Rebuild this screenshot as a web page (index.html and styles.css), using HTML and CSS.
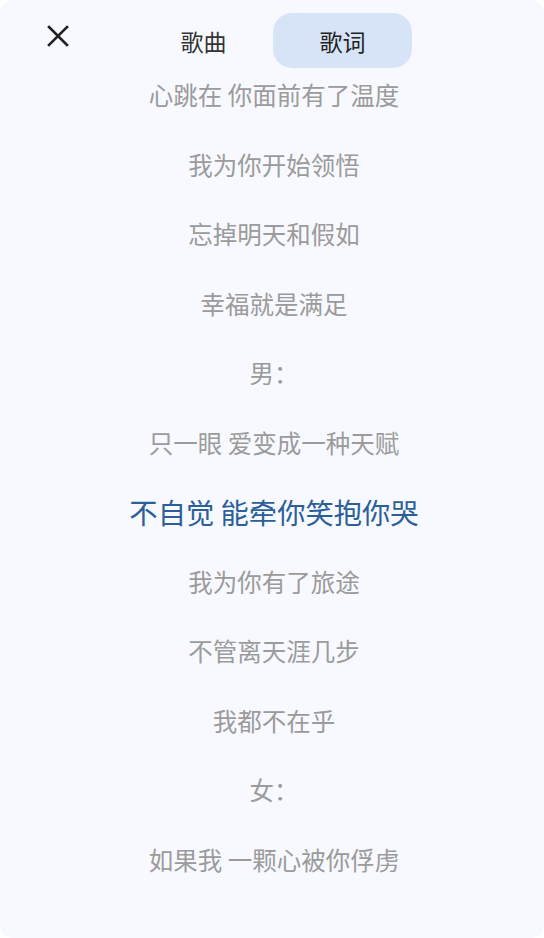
FILE: index.html
```html
<!DOCTYPE html>
<html lang="zh-CN">
<head>
<meta charset="utf-8">
<link rel="stylesheet" href="styles.css">
</head>
<body>
<div class="card">
  <header class="header">
    <button class="close" aria-label="关闭">
      <svg width="22" height="22" viewBox="0 0 22 22"><path d="M2 2 L20 20 M20 2 L2 20" stroke="#222" stroke-width="2.6" stroke-linecap="square" fill="none"/></svg>
    </button>
    <nav class="tabs">
      <div class="tab">歌曲</div>
      <div class="tab active">歌词</div>
    </nav>
  </header>
  <main class="lyrics">
    <p class="line">心跳在 你面前有了温度</p>
    <p class="line">我为你开始领悟</p>
    <p class="line">忘掉明天和假如</p>
    <p class="line">幸福就是满足</p>
    <p class="line">男：</p>
    <p class="line">只一眼 爱变成一种天赋</p>
    <p class="line current">不自觉 能牵你笑抱你哭</p>
    <p class="line">我为你有了旅途</p>
    <p class="line">不管离天涯几步</p>
    <p class="line">我都不在乎</p>
    <p class="line">女：</p>
    <p class="line">如果我 一颗心被你俘虏</p>
  </main>
</div>
</body>
</html>
```
FILE: styles.css
```css
html, body {
  margin: 0;
  padding: 0;
  background: #ffffff;
}
body {
  width: 544px;
  height: 938px;
  overflow: hidden;
  font-family: "Noto Sans CJK SC", "Noto Sans", sans-serif;
}
.card {
  width: 544px;
  height: 938px;
  background: #f7f9ff;
  border-radius: 14px;
  overflow: hidden;
  box-sizing: border-box;
}
.header {
  height: 75px;
  display: flex;
  align-items: flex-start;
}
.close {
  width: 40px;
  height: 40px;
  margin: 16px 0 0 38px;
  padding: 0;
  border: none;
  background: none;
  display: flex;
  align-items: center;
  justify-content: center;
}
.tabs {
  display: flex;
  margin: 13px 0 0 56px;
}
.tab {
  width: 139px;
  height: 55px;
  display: flex;
  align-items: center;
  justify-content: center;
  font-size: 23px;
  color: #333333;
  border-radius: 19px;
}
.tab.active {
  background: #d7e4f7;
  color: #222222;
}
.lyrics {
  display: flex;
  flex-direction: column;
  gap: 29.55px;
  padding-left: 4px;
}
.line {
  margin: 0;
  height: 40px;
  line-height: 40px;
  text-align: center;
  font-size: 24.5px;
  color: #9b9b9b;
  white-space: nowrap;
}
.line.current {
  font-size: 28.3px;
  color: #2c5f98;
}
```
